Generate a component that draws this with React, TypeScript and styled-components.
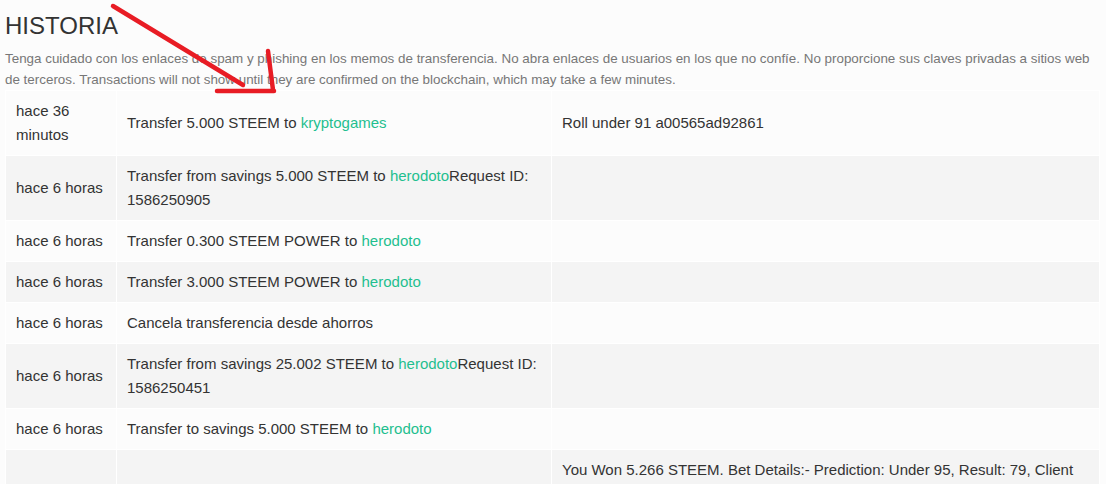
import React from "react";
import styled, { createGlobalStyle } from "styled-components";

const GlobalStyle = createGlobalStyle`
  html, body {
    margin: 0;
    padding: 0;
    background: #fcfcfc;
    font-family: "Liberation Sans", Arial, sans-serif;
  }
`;

const Page = styled.div`
  position: relative;
  display: flow-root;
  padding: 0 6px 0 5px;
`;

const Title = styled.h2`
  margin: 11px 0 7px;
  font-size: 24px;
  line-height: 30px;
  font-weight: 400;
  color: #333;
`;

const Notice = styled.p`
  margin: 1px -6px 0 0;
  font-size: 13.4px;
  line-height: 21px;
  color: #777;
`;

const Table = styled.table`
  width: 100%;
  border-collapse: collapse;
  table-layout: fixed;
  font-size: 15px;
  line-height: 24px;
  color: #333;
`;

const Row = styled.tr<{ $striped: boolean }>`
  background: ${(p) => (p.$striped ? "#f4f4f4" : "transparent")};
`;

const Cell = styled.td<{ $width?: number }>`
  box-sizing: border-box;
  padding: 8px 10px;
  border: 1px solid #fff;
  vertical-align: middle;
  width: ${(p) => (p.$width ? `${p.$width}px` : "auto")};
`;

const Account = styled.a`
  color: #1fbf8f;
  text-decoration: none;
`;

const Arrow = styled.svg`
  position: absolute;
  left: 0;
  top: 0;
  pointer-events: none;
`;

type Item = {
  when: string;
  text: string;
  to?: string;
  after?: string;
  memo?: string;
};

const items: Item[] = [
  { when: "hace 36 minutos", text: "Transfer 5.000 STEEM to ", to: "kryptogames", memo: "Roll under 91 a00565ad92861" },
  { when: "hace 6 horas", text: "Transfer from savings 5.000 STEEM to ", to: "herodoto", after: "Request ID: 1586250905" },
  { when: "hace 6 horas", text: "Transfer 0.300 STEEM POWER to ", to: "herodoto" },
  { when: "hace 6 horas", text: "Transfer 3.000 STEEM POWER to ", to: "herodoto" },
  { when: "hace 6 horas", text: "Cancela transferencia desde ahorros" },
  { when: "hace 6 horas", text: "Transfer from savings 25.002 STEEM to ", to: "herodoto", after: "Request ID: 1586250451" },
  { when: "hace 6 horas", text: "Transfer to savings 5.000 STEEM to ", to: "herodoto" },
  {
    when: "",
    text: "",
    memo: "You Won 5.266 STEEM. Bet Details:- Prediction: Under 95, Result: 79, Client Seed: a00565ad92861, Server Seed: 9f1c2e7b",
  },
];

const App = () => {
  return (
    <Page>
      <GlobalStyle />
      <Title>HISTORIA</Title>
      <Notice>
        Tenga cuidado con los enlaces de spam y phishing en los memos de transferencia. No abra enlaces de usuarios en
        los que no confíe. No proporcione sus claves privadas a sitios web de terceros. Transactions will not show until
        they are confirmed on the blockchain, which may take a few minutes.
      </Notice>
      <Table>
        <tbody>
          {items.map((item, i) => (
            <Row key={i} $striped={i % 2 === 1}>
              <Cell $width={111}>{item.when}</Cell>
              <Cell $width={435}>
                {item.text}
                {item.to && <Account href="#">{item.to}</Account>}
                {item.after}
              </Cell>
              <Cell>{item.memo}</Cell>
            </Row>
          ))}
        </tbody>
      </Table>
      <Arrow width="300" height="100">
        <g stroke="#e81c24" strokeWidth="4.5" strokeLinecap="round" fill="none">
          <line x1="113" y1="6" x2="243" y2="85" />
          <line x1="217" y1="91" x2="274" y2="91" />
          <line x1="268" y1="51" x2="273" y2="90" />
        </g>
      </Arrow>
    </Page>
  );
};

export default App;
